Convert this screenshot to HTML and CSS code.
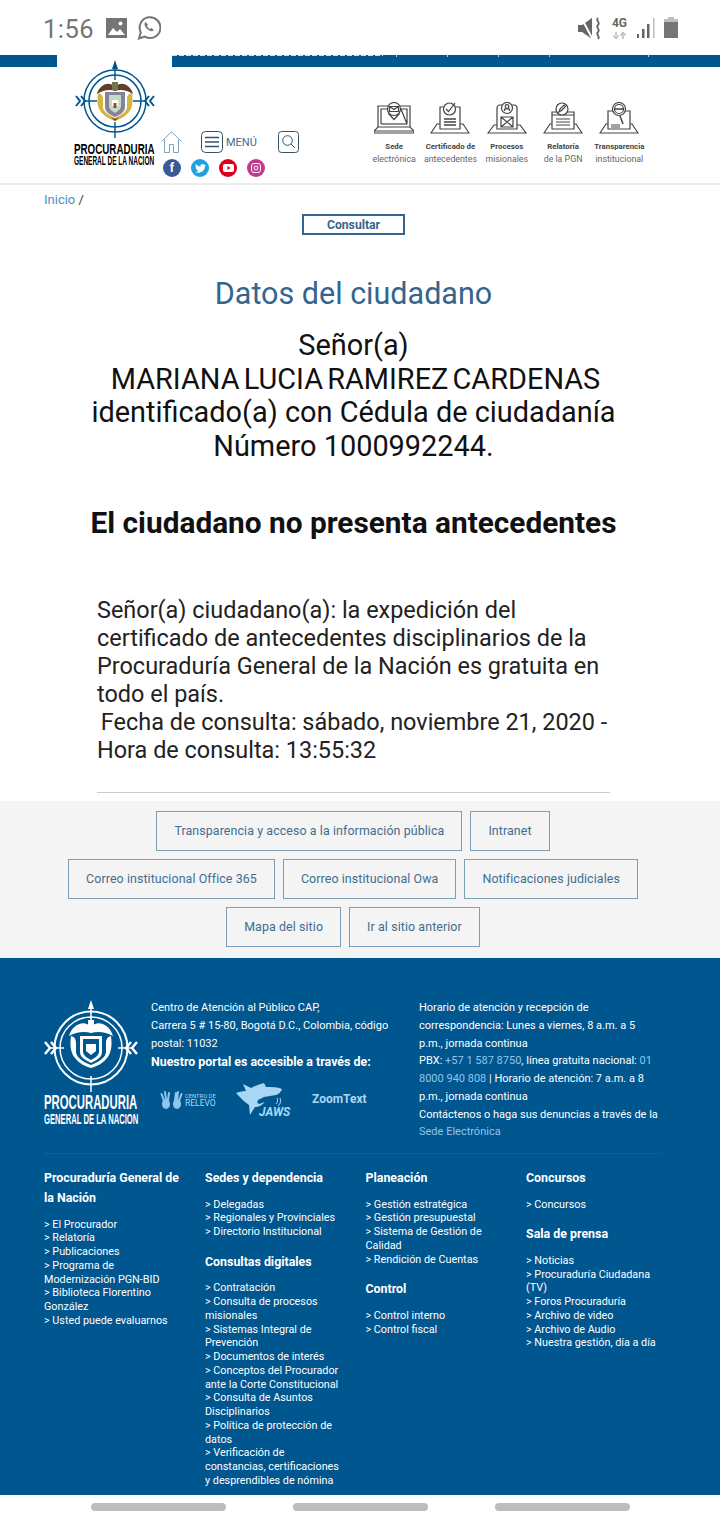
FILE: index.html
```html
<!DOCTYPE html>
<html lang="es">
<head>
    <meta charset="UTF-8">
    <title>Datos del ciudadano</title>
    <link rel="stylesheet" href="styles.css">
</head>
<body>
    <div class="status-bar">
        <div class="status-left">
            <span class="clock">1:56</span>
            <svg class="st-image" width="21" height="20" viewBox="0 0 21 20"><path d="M0 0h21v20H0z" fill="#757575"/><path d="M2 17l5-7 4 4 3-3 5 6z" fill="#fff"/><circle cx="14.500" cy="5.500" r="2" fill="#fff"/></svg>
            <svg class="st-whatsapp" width="24" height="25" viewBox="0 0 24 25"><path d="M2 23.500l1.800-6.100A10.400 10.400 0 1 1 7.800 21.600z" fill="none" stroke="#757575" stroke-width="2"/><path d="M8.500 7c-1.700 1.500-1 4.300 1.500 6.800s5.300 3.200 6.800 1.500l-2.200-2.200-1.600.9c-1-.5-2.500-2-3-3l.9-1.600z" fill="#757575"/></svg>
        </div>
        <div class="status-right">
            <svg class="st-mute" width="23" height="23" viewBox="0 0 23 23"><path d="M0 8h4l10-7v21L4 15H0z" fill="#666"/><path d="M3 0l12 23" stroke="#fff" stroke-width="2"/><path d="M10 5l4-4v6z" fill="#666"/><path d="M20 1c-3 3 3 4 0 7s3 4 0 7 3 4 0 7" fill="none" stroke="#666" stroke-width="1.800"/></svg>
            <div class="net">
                <b>4G</b>
                <svg width="15" height="7" viewBox="0 0 15 7"><path d="M4 0v4M1.500 3.500L4 6.500l2.500-3" fill="none" stroke="#bbb" stroke-width="1.500"/><path d="M11 7V2.500M8.500 3.500L11 .5l2.500 3" fill="none" stroke="#bbb" stroke-width="1.500"/></svg>
            </div>
            <svg class="st-signal" width="18" height="20" viewBox="0 0 18 20"><path d="M0 16h2v4H0zM5 11h2.500v9H5zM10 6h2.500v14H10z" fill="#666"/><path d="M16 0h1.500v20H16z" fill="#bbb"/></svg>
            <svg class="st-battery" width="14" height="21" viewBox="0 0 14 21"><path d="M4 0h6v2h4v19H0V2h4z" fill="#bdbdbd"/><path d="M0 5h14v16H0z" fill="#757575"/></svg>
        </div>
    </div>

    <div class="top-bar">
        <div class="top-blue top-blue-left"></div>
        <div class="top-tab"></div>
        <div class="top-blue top-blue-right">
            <span class="top-clip"></span>
            <span class="top-sep"></span>
            <span class="top-sep"></span>
            <span class="top-sep"></span>
            <span class="top-sep"></span>
            <span class="top-sep top-sep-far"></span>
        </div>
    </div>

    <header class="site-header">
        <div class="brand">
            <svg class="emblem" width="80" height="78" viewBox="0 0 80 78">
                <g fill="none" stroke="#00568f">
                    <circle cx="40" cy="41" r="31" stroke-width="1.500"/>
                    <circle cx="40" cy="41" r="26" stroke-width="1.500"/>
                    <path d="M40 4v16M40 62v16M9 41h13M58 41h13" stroke-width="1.400"/>
                    <path d="M1 36l4 5-4 5M6 36l4 5-4 5M79 36l-4 5 4 5M74 36l-4 5 4 5" stroke-width="2"/>
                </g>
                <path d="M40 0l3 9h-6z" fill="#00568f"/>
                <path d="M22 34c2-9 12-14 18-7 6-7 16-2 18 7-6-4-13-5-18-3-5-2-12-1-18 3z" fill="#5f3f28"/>
                <path d="M37 22h6v8h-6z" fill="#6f7a4a"/>
                <path d="M23 33c4 1 5 3 5 6v8c0 4 5 8 12 11 7-3 12-7 12-11v-8c0-3 1-5 5-6 1 7 1 14-3 19-3 4-8 7-14 9-6-2-11-5-14-9-4-5-4-12-3-19z" fill="#d6b53e"/>
                <path d="M30 32h20v15c0 5-5 8-10 10-5-2-10-5-10-10z" fill="#86829a"/>
                <path d="M34 35h12v11c0 3-3 5-6 7-3-2-6-4-6-7z" fill="#c2dcc6"/>
                <path d="M37 40h6v6h-6z" fill="#fff"/>
                <path d="M38.500 43h3v5h-3z" fill="#a8403a"/>
                <path d="M36 57l4 4 4-4-4 2z" fill="#8a2f2a"/>
            </svg>
            <div class="brand-name">PROCURADURIA</div>
            <div class="brand-sub">GENERAL DE LA NACION</div>
        </div>

        <div class="tools">
            <div class="tools-row">
                <svg class="ic-home" width="21" height="22" viewBox="0 0 21 22"><path d="M.5 10.500L10.500.8l10 9.700M3.500 8.500v13h5v-8h4v8h5v-13" fill="none" stroke="#7fa5ba" stroke-width="1"/></svg>
                <svg class="ic-menu" width="22" height="22" viewBox="0 0 22 22"><rect x=".5" y=".5" width="21" height="21" rx="4" fill="none" stroke="#33536b"/><path d="M4 6.500h14M4 11h14M4 15.500h14" stroke="#33536b" stroke-width="1.600"/></svg>
                <span class="menu-label">MENÚ</span>
                <svg class="ic-search" width="21" height="22" viewBox="0 0 21 22"><rect x=".5" y=".5" width="20" height="21" rx="3" fill="none" stroke="#33536b"/><circle cx="9.500" cy="9.500" r="4.800" fill="none" stroke="#33536b"/><path d="M13 13l4 4" stroke="#33536b"/></svg>
            </div>
            <div class="social">
                <span class="soc soc-fb">f</span>
                <span class="soc soc-tw"><svg width="11" height="9" viewBox="0 0 11 9"><path d="M0 8c4 2 10 0 10-6l1-1-1.500.3L10.500 0 9 .7C7.500-.7 5 .500 5.500 2.500 3.500 2.500 2 1.500.8.300c-.6 1.200-.3 2.400.7 3.200L.5 3.300c0 1.100.8 2 2 2.300h-1c.3.900 1.100 1.400 2 1.500C2.500 7.800 1.300 8.100 0 8z" fill="#fff"/></svg></span>
                <span class="soc soc-yt"><svg width="11" height="8" viewBox="0 0 11 8"><rect width="11" height="8" rx="2" fill="#fff"/><path d="M4.500 2l3 2-3 2z" fill="#d9001b"/></svg></span>
                <span class="soc soc-ig"><svg width="10" height="10" viewBox="0 0 10 10"><rect x=".5" y=".5" width="9" height="9" rx="2.500" fill="none" stroke="#fff"/><circle cx="5" cy="5" r="2" fill="none" stroke="#fff"/></svg></span>
            </div>
        </div>

        <nav class="quick-links">
            <a class="quick">
                <svg width="40" height="32" viewBox="0 0 40 32"><g fill="none" stroke="#444" stroke-width="1.200"><path d="M4 25V4h10M26 4h10v21"/><path d="M7 22V7h6M27 7h6v15z"/><path d="M7 22h26"/><path d="M0 29l4-4h32l4 4v2H0zM0 29h40"/><circle cx="20" cy="7" r="6.500" fill="#fff"/><path d="M15.500 4.500h9v5h-9zM15.500 4.500l4.500 3 4.500-3"/><path d="M14.500 11.500l5.500 6 5.500-6"/></g></svg>
                <b>Sede</b><span>electrónica</span>
            </a>
            <a class="quick">
                <svg width="40" height="32" viewBox="0 0 40 32"><g fill="none" stroke="#444" stroke-width="1.200"><path d="M1 31l6-9h26l6 9z"/><path d="M10 27V5h20v22z" fill="#fff"/><path d="M14 17h12M14 20h12M14 23h12" stroke-width="1.300"/><circle cx="19.500" cy="7" r="6" fill="#fff"/><path d="M16 7l2.500 2.500L25 1"/></g></svg>
                <b>Certificado de</b><span>antecedentes</span>
            </a>
            <a class="quick">
                <svg width="40" height="32" viewBox="0 0 40 32"><g fill="none" stroke="#444" stroke-width="1.200"><path d="M1 31l6-8h26l6 8z"/><path d="M10 27V6a3 3 0 0 1 3-3h14a3 3 0 0 1 3 3v21z" fill="#fff"/><circle cx="20" cy="6" r="5.500" fill="#fff"/><circle cx="20" cy="4.500" r="1.800"/><path d="M17.500 9V7h5v2"/><path d="M14 15h12v10H14zM14 15l6 5 6-5M14 25l6-5 6 5"/></g></svg>
                <b>Procesos</b><span>misionales</span>
            </a>
            <a class="quick">
                <svg width="40" height="32" viewBox="0 0 40 32"><g fill="none" stroke="#444" stroke-width="1.200"><path d="M1 31l6-9h26l6 9z"/><path d="M9 27V10h22v17z" fill="#fff"/><path d="M9 13h22M13 17h14M13 20h14M13 23h14"/><circle cx="19" cy="7" r="6" fill="#fff"/><path d="M16 10l1-3 4-4 1.500 1.500-4 4z"/></g></svg>
                <b>Relatoría</b><span>de la PGN</span>
            </a>
            <a class="quick">
                <svg width="40" height="32" viewBox="0 0 40 32"><g fill="none" stroke="#444" stroke-width="1.200"><path d="M1 31l6-9h26l6 9z"/><path d="M9 27V9h22v18z" fill="#fff"/><path d="M12 23h9M12 25h9"/><circle cx="20" cy="7" r="6.500" fill="#fff"/><circle cx="20" cy="7" r="4.500"/><path d="M15 7h10M21 14l3 8" stroke-width="1.500"/></g></svg>
                <b>Transparencia</b><span>institucional</span>
            </a>
        </nav>
    </header>

    <div class="breadcrumb"><a>Inicio</a> /</div>

    <main class="content">
        <div class="consult-wrap"><button class="consult-btn">Consultar</button></div>
        <h2 class="page-title">Datos del ciudadano</h2>
        <div class="citizen">
            Señor(a)<br>
            <span class="citizen-name">MARIANA LUCIA RAMIREZ CARDENAS</span><br>
            identificado(a) con Cédula de ciudadanía<br>
            Número 1000992244.
        </div>
        <h2 class="result">El ciudadano no presenta antecedentes</h2>
        <p class="notice">
            Señor(a) ciudadano(a): la expedición del certificado de antecedentes disciplinarios de la Procuraduría General de la Nación es gratuita en todo el país.<br>
            <span class="lead-space">&nbsp;</span>Fecha de consulta: sábado, noviembre 21, 2020 - Hora de consulta: 13:55:32
        </p>
        <hr class="divider">
    </main>

    <section class="link-band">
        <div class="link-row"><a class="band-link">Transparencia y acceso a la información pública</a><a class="band-link">Intranet</a></div>
        <div class="link-row"><a class="band-link">Correo institucional Office 365</a><a class="band-link">Correo institucional Owa</a><a class="band-link">Notificaciones judiciales</a></div>
        <div class="link-row"><a class="band-link">Mapa del sitio</a><a class="band-link">Ir al sitio anterior</a></div>
    </section>

    <footer class="site-footer">
        <div class="footer-top">
            <div class="footer-brand">
                <svg width="96" height="92" viewBox="0 0 96 92">
                    <g fill="none" stroke="#fff">
                        <circle cx="47" cy="48" r="36.500" stroke-width="2"/>
                        <circle cx="47" cy="48" r="31" stroke-width="1.500"/>
                        <path d="M47 6v14M47 76v16M6 48h14M74 48h14" stroke-width="1.500"/>
                        <path d="M1 42l5 6-5 6M7 42l5 6-5 6M93 42l-5 6 5 6M87 42l-5 6 5 6" stroke-width="2.500"/>
                    </g>
                    <path d="M47 0l3 9h-6z" fill="#fff"/>
                    <path d="M25 36c3-11 15-17 22-9 7-8 19-2 22 9-7-4-15-5-22-3-7-2-15-1-22 3z" fill="#fff"/>
                    <path d="M44 20h6v8h-6z" fill="#fff"/>
                    <path d="M27 36c4 1 5 4 5 7v9c0 5 7 10 15 13 8-3 15-8 15-13v-9c0-3 1-6 5-7 1 8 1 16-4 22-4 5-9 8-16 10-7-2-12-5-16-10-5-6-5-14-4-22z" fill="#fff"/>
                    <path d="M36 36h22v16c0 5-5 8-11 11-6-3-11-6-11-11z" fill="#fff"/>
                    <path d="M39 39h16v13c0 3-4 6-8 8-4-2-8-5-8-8z" fill="#00568f"/>
                    <path d="M42 44h10v7l-5 4-5-4z" fill="#fff"/>
                </svg>
                <div class="footer-name">PROCURADURIA</div>
                <div class="footer-sub">GENERAL DE LA NACION</div>
            </div>
            <div class="footer-info">
                Centro de Atención al Público CAP,<br>
                Carrera 5 # 15-80, Bogotá D.C., Colombia, código postal: 11032<br>
                <b class="accessible">Nuestro portal es accesible a través de:</b>
                <div class="access-logos">
                    <div class="relevo">
                        <svg width="23" height="20" viewBox="0 0 23 20"><g fill="none" stroke="#8fc5ea" stroke-width="2" stroke-linecap="round"><path d="M1.500 4L4 11M5 2l1 8M9 3L8 10M16 3l-1 7M18 2l-1 8M21.500 4L19 11"/></g><ellipse cx="6" cy="14" rx="4" ry="5" fill="#8fc5ea"/><ellipse cx="17" cy="14" rx="4" ry="5" fill="#8fc5ea"/></svg>
                        <span class="relevo-text"><small>CENTRO DE</small>RELEVO</span>
                    </div>
                    <div class="jaws">
                        <svg width="54" height="34" viewBox="0 0 54 34"><path d="M0 10c3-1 6-2 10-2L7 1l8 4c4-2 9-4 13-5l2 4c6 0 12 0 16 2-1 3-3 5-6 6l-12 2-6 3c-1 2-1 3 1 4l6-2c-3 3-6 5-10 5l-5 8-1-10C7 18 4 14 0 10z" fill="#a9d6f4"/><path d="M41 15c1 2 1 4-1 6M44 15c1 3 1 5-2 8" fill="none" stroke="#a9d6f4"/></svg>
                        <span class="jaws-text">JAWS</span>
                    </div>
                    <span class="zoomtext">ZoomText</span>
                </div>
            </div>
            <div class="footer-hours">
                Horario de atención y recepción de correspondencia: Lunes a viernes, 8 a.m. a 5 p.m., jornada continua<br>
                PBX: <a>+57 1 587 8750</a>, línea gratuita nacional: <a>01</a><br>
                <a>8000 940 808</a> | Horario de atención: 7 a.m. a 8 p.m., jornada continua<br>
                Contáctenos o haga sus denuncias a través de la <a>Sede Electrónica</a>
            </div>
        </div>

        <div class="footer-cols">
            <div class="fcol">
                <h4>Procuraduría General de la Nación</h4>
                <ul>
                    <li>&gt; El Procurador</li>
                    <li>&gt; Relatoría</li>
                    <li>&gt; Publicaciones</li>
                    <li>&gt; Programa de Modernización PGN-BID</li>
                    <li>&gt; Biblioteca Florentino González</li>
                    <li>&gt; Usted puede evaluarnos</li>
                </ul>
            </div>
            <div class="fcol">
                <h4>Sedes y dependencia</h4>
                <ul>
                    <li>&gt; Delegadas</li>
                    <li>&gt; Regionales y Provinciales</li>
                    <li>&gt; Directorio Institucional</li>
                </ul>
                <h4>Consultas digitales</h4>
                <ul>
                    <li>&gt; Contratación</li>
                    <li>&gt; Consulta de procesos misionales</li>
                    <li>&gt; Sistemas Integral de Prevención</li>
                    <li>&gt; Documentos de interés</li>
                    <li>&gt; Conceptos del Procurador ante la Corte Constitucional</li>
                    <li>&gt; Consulta de Asuntos Disciplinarios</li>
                    <li>&gt; Política de protección de datos</li>
                    <li>&gt; Verificación de<br>constancias, certificaciones<br>y desprendibles de nómina</li>
                </ul>
            </div>
            <div class="fcol">
                <h4>Planeación</h4>
                <ul>
                    <li>&gt; Gestión estratégica</li>
                    <li>&gt; Gestión presupuestal</li>
                    <li>&gt; Sistema de Gestión de Calidad</li>
                    <li>&gt; Rendición de Cuentas</li>
                </ul>
                <h4>Control</h4>
                <ul>
                    <li>&gt; Control interno</li>
                    <li>&gt; Control fiscal</li>
                </ul>
            </div>
            <div class="fcol">
                <h4>Concursos</h4>
                <ul>
                    <li>&gt; Concursos</li>
                </ul>
                <h4>Sala de prensa</h4>
                <ul>
                    <li>&gt; Noticias</li>
                    <li>&gt; Procuraduría Ciudadana (TV)</li>
                    <li>&gt; Foros Procuraduría</li>
                    <li>&gt; Archivo de video</li>
                    <li>&gt; Archivo de Audio</li>
                    <li>&gt; Nuestra gestión, día a día</li>
                </ul>
            </div>
        </div>
    </footer>

    <div class="nav-bar">
        <span class="pill"></span>
        <span class="pill"></span>
        <span class="pill"></span>
    </div>
</body>
</html>
```

FILE: styles.css
```css
* {
    box-sizing: border-box;
}

html, body {
    margin: 0;
    padding: 0;
}

body {
    width: 720px;
    height: 1520px;
    overflow: hidden;
    font-family: Roboto, "Liberation Sans", sans-serif;
    background: #fff;
    color: #111;
}

/* phone status bar */
.status-bar {
    height: 55px;
    display: flex;
    justify-content: space-between;
    padding: 15px 42px 0 43px;
}

.status-left {
    display: flex;
    align-items: flex-start;
}

.clock {
    font-size: 25.500px;
    line-height: 28px;
    color: #757575;
    letter-spacing: .5px;
    width: 63px;
}

.st-image {
    margin-top: 3px;
}

.st-whatsapp {
    margin-left: 10px;
}

.status-right {
    display: flex;
    align-items: flex-start;
}

.st-mute {
    margin-top: 2px;
}

.net {
    display: flex;
    flex-direction: column;
    align-items: center;
    width: 15px;
    color: #666;
    margin: 2px 10px 0 11px;
}

.net b {
    font-size: 12px;
    line-height: 13px;
    font-weight: 700;
}

.net svg {
    margin-top: 2px;
}

.st-signal {
    margin-top: 3px;
    margin-right: 9px;
}

.st-battery {
    margin-top: 2px;
}

/* blue strip on top of the header */
.top-bar {
    display: flex;
    height: 12px;
}

.top-blue {
    background: #00568f;
}

.top-blue-left {
    width: 57px;
}

.top-tab {
    width: 115px;
}

.top-blue-right {
    flex: 1;
    display: flex;
    align-items: flex-start;
}

.top-clip {
    width: 211px;
    height: 1px;
    background: repeating-linear-gradient(90deg, #cfe0ec 0 5px, #00568f 5px 7px);
}

.top-sep {
    width: 1px;
    height: 2px;
    background: #b9d2e3;
    margin-left: 50px;
}

.top-clip + .top-sep {
    margin-left: 13px;
}

.top-sep-far {
    margin-left: 98px;
}

.site-header {
    height: 118px;
    border-bottom: 2px solid #ececec;
    display: flex;
    align-items: flex-start;
    padding-left: 75px;
}

.brand {
    width: 80px;
    margin-top: -7px;
}

.emblem {
    display: block;
}

/* no condensed face installed, so the wordmark is squeezed */
.brand-name, .brand-sub, .footer-name, .footer-sub {
    font-family: "Liberation Sans", sans-serif;
    font-weight: 700;
    white-space: nowrap;
    transform-origin: left center;
}

.brand-name {
    font-size: 15.300px;
    line-height: 14px;
    color: #000;
    margin: 3.500px 0 0 -1px;
    transform: scaleX(.64);
}

.brand-sub {
    font-size: 12.500px;
    line-height: 11px;
    color: #000;
    margin-left: -1px;
    transform: scaleX(.52);
}

.tools {
    margin-left: 6px;
    padding-top: 64px;
    width: 145px;
}

.tools-row {
    display: flex;
    align-items: center;
    height: 22px;
}

.ic-menu {
    margin-left: 19px;
}

.menu-label {
    font-size: 11px;
    color: #3f6d8c;
    margin-left: 3px;
    width: 31px;
}

.ic-search {
    margin-left: 21px;
}

.social {
    display: flex;
    gap: 10px;
    margin-top: 6px;
    margin-left: 2px;
}

.soc {
    width: 18px;
    height: 18px;
    border-radius: 50%;
    display: flex;
    align-items: center;
    justify-content: center;
    color: #fff;
    font-size: 12px;
    font-weight: 700;
}

.soc-fb {
    background: #3b5998;
}

.soc-tw {
    background: #1da1e2;
}

.soc-yt {
    background: #d9001b;
}

.soc-ig {
    background: #c13a8f;
}

.quick-links {
    display: flex;
    margin-left: 60px;
    padding-top: 35px;
}

.quick {
    width: 56.300px;
    display: flex;
    flex-direction: column;
    align-items: center;
    white-space: nowrap;
    font-size: 8.800px;
    color: #666;
}

.quick svg {
    margin-bottom: 6px;
}

.quick b {
    font-size: 7.800px;
    line-height: 13px;
    color: #444;
}

.quick span {
    line-height: 13px;
}

.breadcrumb {
    height: 29px;
    padding: 7px 0 0 44px;
    font-size: 13px;
    line-height: 15px;
    color: #444;
}

.breadcrumb a {
    color: #4a90c8;
}

.content {
    height: 587px;
    padding: 0 110px 0 97px;
}

.consult-wrap {
    display: flex;
    justify-content: center;
    height: 21px;
}

.consult-btn {
    width: 103px;
    height: 21px;
    padding: 0;
    background: #fff;
    border: 2px solid #35658f;
    font-family: Roboto, sans-serif;
    font-size: 12.200px;
    font-weight: 700;
    color: #35658f;
}

.page-title {
    margin: 41px -60px 0;
    font-size: 30.500px;
    line-height: 36px;
    font-weight: 400;
    text-align: center;
    color: #35658f;
}

.citizen {
    margin: 17px -60px 0;
    font-size: 28.900px;
    line-height: 33.500px;
    text-align: center;
    color: #111;
}

.citizen-name {
    word-spacing: -3px;
    padding-left: 4px;
}

.result {
    margin: 43px -60px 0;
    font-size: 29.800px;
    line-height: 34px;
    font-weight: 700;
    text-align: center;
    color: #111;
}

.notice {
    margin: 56px 0 0;
    font-size: 23.450px;
    line-height: 28px;
    color: #222;
}

.lead-space {
    letter-spacing: -2px;
}

.divider {
    margin: 28px 0 0;
    border: 0;
    border-top: 1px solid #ccc;
}

.link-band {
    height: 157px;
    background: #f4f4f4;
    padding: 10px 14px 0 0;
    display: flex;
    flex-direction: column;
    gap: 8px;
}

.link-row {
    display: flex;
    justify-content: center;
    gap: 8px;
}

.band-link {
    height: 40px;
    padding: 0 17px 2px;
    display: flex;
    align-items: center;
    border: 1px solid #7d9fb3;
    font-size: 12.400px;
    letter-spacing: .1px;
    color: #3f6e8f;
}

.site-footer {
    height: 537px;
    background: #00568f;
    color: #fff;
    padding: 0 59px 0 44px;
}

.footer-top {
    height: 196px;
    padding-top: 41px;
    display: flex;
    border-bottom: 1px solid #0b6199;
}

.footer-brand {
    width: 107px;
    flex: none;
}

.footer-brand svg {
    display: block;
    margin-top: 1px;
}

.footer-name {
    font-size: 19.400px;
    line-height: 19px;
    margin-top: 1px;
    transform: scaleX(.585);
}

.footer-sub {
    font-size: 15.300px;
    line-height: 14px;
    transform: scaleX(.5);
}

.footer-info {
    width: 268px;
    flex: none;
    font-size: 11px;
    line-height: 18px;
}

.accessible {
    font-size: 12.400px;
}

.access-logos {
    display: flex;
    align-items: center;
    margin-top: 11px;
    margin-left: 9px;
}

.relevo {
    display: flex;
    align-items: center;
    gap: 2px;
    width: 76px;
    color: #a9d6f4;
}

.relevo-text {
    font-size: 8.500px;
    line-height: 8px;
    display: flex;
    flex-direction: column;
}

.relevo-text small {
    font-size: 5.800px;
    line-height: 6px;
}

.jaws {
    position: relative;
    width: 76px;
    height: 34px;
}

.jaws svg {
    display: block;
}

.jaws-text {
    position: absolute;
    left: 23px;
    top: 22px;
    font-size: 12px;
    line-height: 14px;
    font-weight: 700;
    font-style: italic;
    color: #a9d6f4;
}

.zoomtext {
    font-size: 12px;
    font-weight: 700;
    line-height: 14px;
    color: #a9d6f4;
    margin-top: -3px;
}

.footer-hours {
    flex: 1;
    font-size: 11px;
    line-height: 17.750px;
}

.footer-hours a {
    color: #8fc5ea;
}

.footer-cols {
    display: grid;
    grid-template-columns: 161px 160.500px 160.500px 135px;
    padding-top: 14px;
}

.fcol {
    padding-right: 20px;
    font-size: 10.800px;
    line-height: 13.750px;
}

.fcol:nth-child(4) {
    padding-right: 0;
}

.fcol h4 {
    margin: 0;
    font-size: 12.400px;
    line-height: 20px;
    font-weight: 700;
}

.fcol ul {
    list-style: none;
    margin: 9.500px 0 13px;
    padding: 0;
}

.nav-bar {
    height: 25px;
    display: flex;
    gap: 67px;
    padding: 8px 0 0 91px;
}

.pill {
    width: 135px;
    height: 8px;
    border-radius: 4px;
    background: #bdbdbd;
}
```
